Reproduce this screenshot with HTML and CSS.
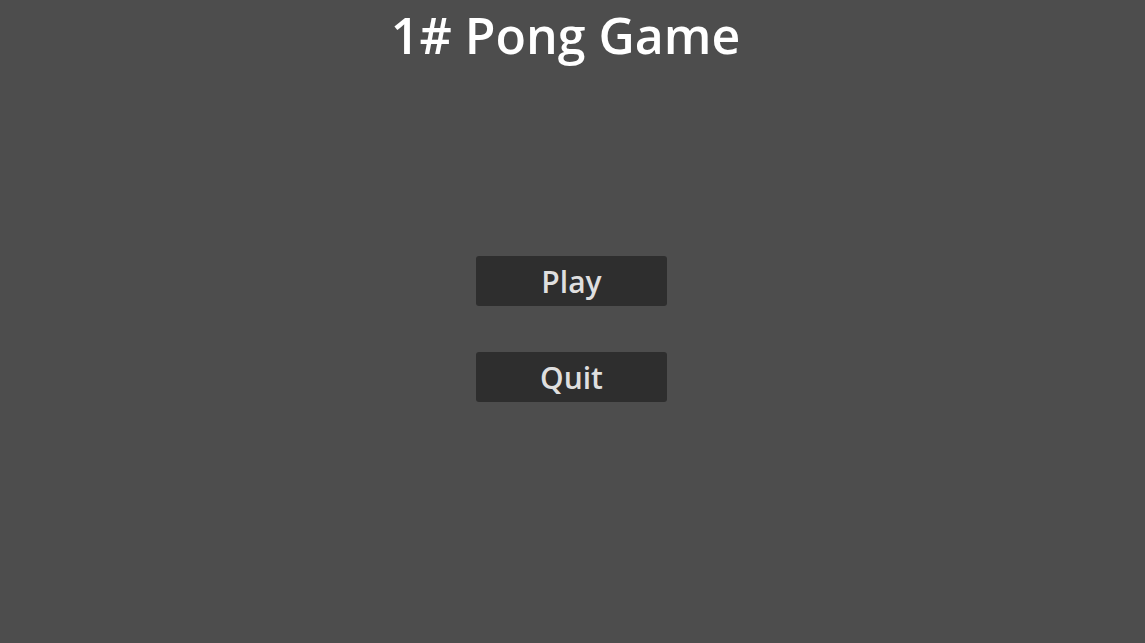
FILE: index.html
```html
<!DOCTYPE html>
<html lang="en">
<head>
  <meta charset="UTF-8" />
  <title>1# Pong Game</title>
  <link rel="stylesheet" href="styles.css">
</head>
<body>
  <div class="menu">
    <h1 class="title">1# Pong Game</h1>
    <div class="buttons">
      <button class="menu-btn">Play</button>
      <button class="menu-btn">Quit</button>
    </div>
  </div>
</body>
</html>
```
FILE: styles.css
```css
html, body {
  margin: 0;
  height: 100%;
}

body {
  background: #4d4d4d;
  font-family: "Open Sans", "Noto Sans", sans-serif;
  overflow: hidden;
}

.menu {
  display: flex;
  flex-direction: column;
  align-items: center;
}

.title {
  margin: 1px 0 0 -14px;
  font-size: 50px;
  font-weight: 600;
  line-height: 68px;
  color: #ffffff;
}

.buttons {
  display: flex;
  flex-direction: column;
  gap: 46px;
  margin-top: 187px;
  margin-left: -2px;
}

.menu-btn {
  width: 191px;
  height: 50px;
  padding: 2px 0 0;
  border: none;
  border-radius: 3px;
  background: #2e2e2e;
  color: #dfdfdf;
  font-family: inherit;
  font-size: 30px;
  font-weight: 600;
  line-height: 48px;
}
```
